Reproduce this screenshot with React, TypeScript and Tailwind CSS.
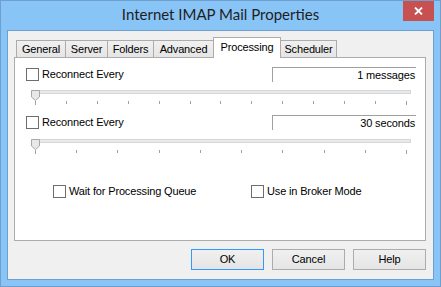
import React from "react";

const font = { fontFamily: "'Liberation Sans', Arial, sans-serif" };

function Check({ label }: { label: string }) {
  return (
    <div className="flex items-center h-[13px]">
      <span className="block w-[13px] h-[13px] border border-[#6d6d6d] bg-white" />
      <span className="ml-[3px] text-[11px] tracking-[-0.15px] leading-[13px] text-black">{label}</span>
    </div>
  );
}

function Slider({ ticks }: { ticks: number }) {
  return (
    <div className="relative ml-[20px] w-[376px] h-[18px]">
      <div className="mt-[3px] h-[4px] border border-[#d6d6d6] bg-[#e7eaea]" />
      <div className="mt-[7px] h-[4px] w-[372px] flex items-start justify-between">
        {Array.from({ length: ticks }).map((_, i) => (
          <span key={i} className={`block w-px bg-[#a0a0a0] ${i === 0 || i === ticks - 1 ? "h-[4px]" : "h-[3px]"}`} />
        ))}
      </div>
      <svg className="absolute left-[-4px] top-0" width="9" height="11" viewBox="0 0 9 11">
        <path d="M0.5 0.5 H8.5 V7 L4.5 10.5 L0.5 7 Z" fill="#e8e8e8" stroke="#a8a8a8" />
      </svg>
    </div>
  );
}

function Row({ value }: { value: string }) {
  return (
    <div className="flex items-center h-[15px]">
      <div className="ml-[11px]">
        <Check label="Reconnect Every" />
      </div>
      <div className="ml-auto mr-[9px] w-[144px] h-[15px] border-t border-l border-[#a0a0a0] bg-white text-right pr-[1px] text-[11px] tracking-[-0.15px] leading-[14px] text-black">
        {value}
      </div>
    </div>
  );
}

const tabs = [
  { name: "General", w: "w-[50px]" },
  { name: "Server", w: "w-[43px]" },
  { name: "Folders", w: "w-[47px]" },
  { name: "Advanced", w: "w-[61px]" },
  { name: "Processing", w: "w-[68px]", active: true },
  { name: "Scheduler", w: "w-[57px]" },
];

function Button({ label, primary }: { label: string; primary?: boolean }) {
  return (
    <div
      className={`w-[73px] h-[21px] flex items-center justify-center text-[11px] tracking-[-0.15px] text-black bg-gradient-to-b from-[#f0f0f0] to-[#e5e5e5] border ${
        primary ? "border-[#3399ff]" : "border-[#acacac]"
      }`}
    >
      {label}
    </div>
  );
}

export default function App() {
  return (
    <div style={font} className="relative w-[441px] h-[287px] flex flex-col border border-[#6f9fcf] bg-[#89c4f7] px-[6px] pb-[6px]">
      <div
        style={{ fontFamily: "Lato, 'Liberation Sans', sans-serif" }}
        className="h-[29px] flex items-center justify-center text-[15px] text-[#1e1e1e] pb-[2px]"
      >
        Internet IMAP Mail Properties
      </div>
      <div className="absolute right-[6px] top-0 w-[31px] h-[20px] bg-[#c75050] flex items-center justify-center">
        <svg width="9" height="8" viewBox="0 0 9 8">
          <path d="M1 0.5 L8 7.5 M8 0.5 L1 7.5" stroke="white" strokeWidth="1.8" />
        </svg>
      </div>
      <div className="flex-1 flex flex-col border border-[#6f9fcf] bg-[#f0f0f0] pt-[6px] pl-[6px] pr-[7px] pb-[8px]">
        <div className="flex items-end h-[20px] pl-[2px]">
          {tabs.map((t, i) =>
            t.active ? (
              <div
                key={t.name}
                className={`${t.w} ${i > 0 ? "-ml-px" : ""} relative z-10 h-[21px] -mb-px border-t border-l border-r border-[#acacac] bg-white flex justify-center pt-[2px] text-[11px] tracking-[-0.15px] leading-[14px] text-black`}
              >
                {t.name}
              </div>
            ) : (
              <div
                key={t.name}
                className={`${t.w} ${i > 0 ? "-ml-px" : ""} h-[17px] border-t border-l border-r border-[#acacac] bg-gradient-to-b from-[#f0f0f0] to-[#e5e5e5] flex justify-center pt-[1px] text-[11px] tracking-[-0.15px] leading-[14px] text-black`}
              >
                {t.name}
              </div>
            )
          )}
        </div>
        <div className="h-[184px] border border-[#acacac] bg-white flex flex-col">
          <div className="mt-[9px]">
            <Row value="1 messages" />
          </div>
          <div className="mt-[5px]">
            <Slider ticks={13} />
          </div>
          <div className="mt-[7px]">
            <Row value="30 seconds" />
          </div>
          <div className="mt-[6px]">
            <Slider ticks={10} />
          </div>
          <div className="mt-[28px] flex">
            <div className="ml-[38px] w-[198px]">
              <Check label="Wait for Processing Queue" />
            </div>
            <Check label="Use in Broker Mode" />
          </div>
        </div>
        <div className="mt-[8px] flex justify-end gap-[8px]">
          <Button label="OK" primary />
          <Button label="Cancel" />
          <Button label="Help" />
        </div>
      </div>
    </div>
  );
}
